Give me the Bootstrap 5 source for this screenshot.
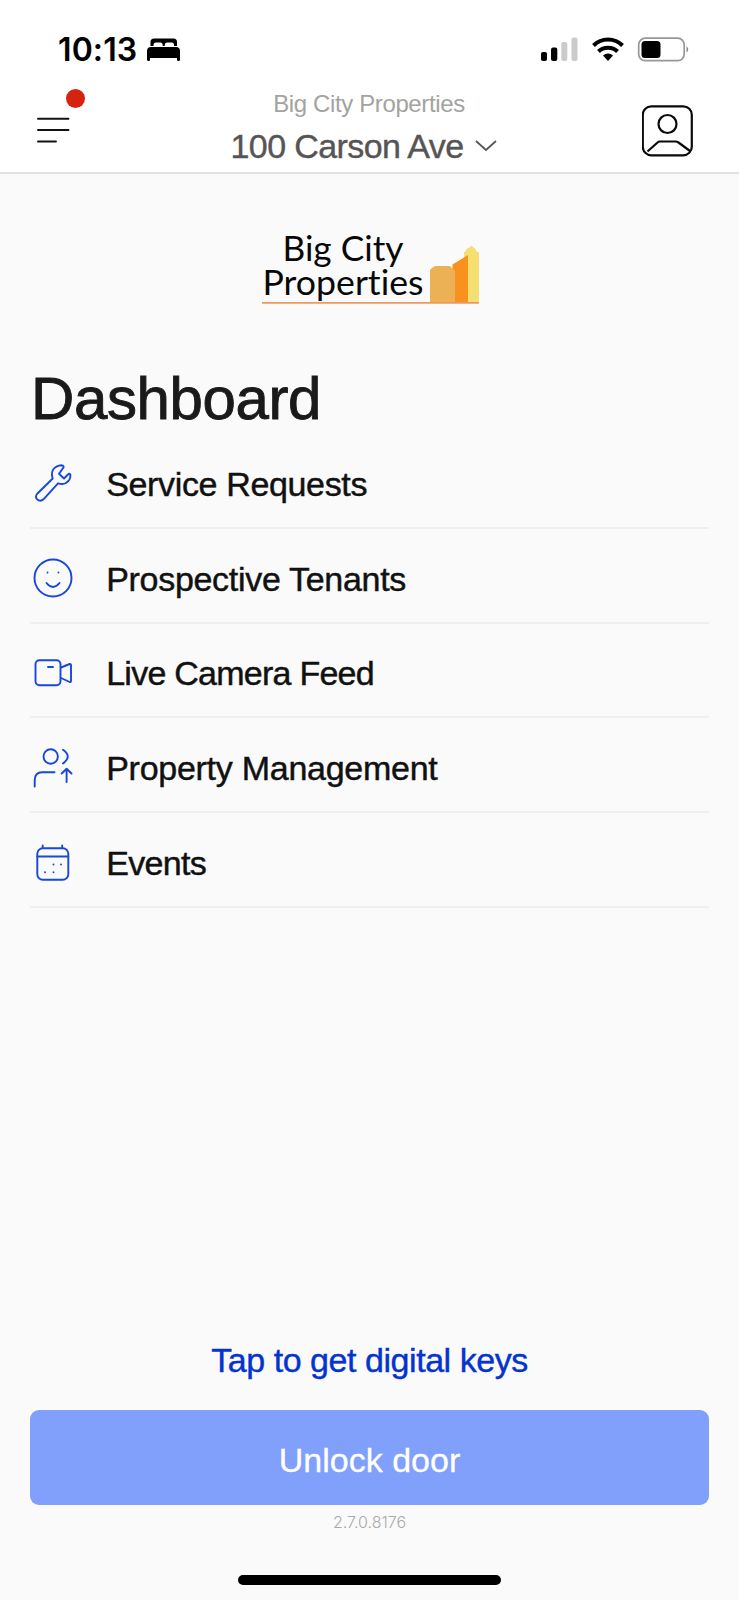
<!DOCTYPE html>
<html lang="en">
<head>
<meta charset="utf-8">
<meta name="viewport" content="width=device-width, initial-scale=1">
<title>Dashboard</title>
<link href="https://cdn.jsdelivr.net/npm/bootstrap@5.3.0/dist/css/bootstrap.min.css" rel="stylesheet">
<style>
body{background:#fafafa;font-family:"Liberation Sans",Arial,sans-serif;color:#111}
.screen{height:1600px;overflow:hidden}
.topbar{height:174px;border-bottom:2px solid #e2e2e2;background:#fff}
.status{height:88px;padding:12px 49px 0 58px}
.clock{font:600 32px/40px Inter,sans-serif;letter-spacing:.1px;color:#000}
.bed{margin-left:10px}
.nav-row{height:84px;padding:0 45px 0 37px}
.side{width:49px}
.dot{width:19px;height:19px;left:29px;top:-28.5px;background:#d6230f}
.company{font-size:24px;line-height:28px;color:#a3a39f;letter-spacing:-.37px;padding-left:10px;margin-top:-4px}
.address{font-size:34px;line-height:40px;color:#555;letter-spacing:-.6px;margin-top:8px;gap:12px;-webkit-text-stroke:.4px #555}
.profile{margin-top:2px}
.brand-logo{margin-top:56px;height:80px;overflow:visible;font-variant-ligatures:none}
.page-title{font-size:60px;line-height:68px;margin:55px 0 0 1px;font-weight:400;color:#1a1a1a;letter-spacing:-.4px;-webkit-text-stroke:.9px #1a1a1a}
.menu{margin-top:1px}
.menu .list-group-item{height:94.8px;padding:6px 0 0 3px;background:none;border:0;border-bottom:2px solid #efefec!important;border-radius:0;font-size:34px;line-height:40px;gap:33.2px;color:#111;-webkit-text-stroke:.45px #111}
.menu span{padding-top:1px}
.menu svg{fill:none;stroke:#1747dc;stroke-width:1.9;stroke-linecap:round;stroke-linejoin:round}
.keys{font-size:34px;line-height:40px;color:#0433cf;letter-spacing:-.45px;-webkit-text-stroke:.4px #0433cf}
.unlock{height:95px;border-radius:9px;background:#80a0fb;border:0;color:#fff;font-size:34px;margin-top:30px;padding:5px 0 0;letter-spacing:0;-webkit-text-stroke:.3px #fff}
.unlock:hover{background:#80a0fb;color:#fff}
.version{font:300 16px/20px Inter,sans-serif;color:#aaa;margin-top:7px;margin-bottom:43px}
.home{width:263px;height:10px;background:#000;margin-bottom:15px}
.bottom{padding:0 30px}
</style>
</head>
<body>
<div class="screen d-flex flex-column">
  <header class="topbar flex-shrink-0">
    <div class="status d-flex align-items-center justify-content-between">
      <div class="d-flex align-items-center">
        <span class="clock">10:13</span>
        <svg class="bed" width="34" height="24" viewBox="0 0 34 24"><path d="M3.500 8V4Q3.500 0.500 7 0.500H26.500Q30 0.500 30 4V8H27V7Q27 4.500 24.500 4.500H20Q17.700 4.500 17.700 7V8H15.700V7Q15.700 4.500 13.500 4.500H9Q6.500 4.500 6.500 7V8Z"/><path d="M0 22V13Q0 9 4 9H29Q33 9 33 13V22Q33 23 31.500 23Q30 23 30 22V20H3V22Q3 23 1.500 23Q0 23 0 22Z"/></svg>
      </div>
      <svg width="150" height="26" viewBox="0 0 150 26">
        <rect x="1" y="15" width="6" height="9" rx="2"/><rect x="11" y="10.500" width="6.300" height="13.500" rx="2"/>
        <rect x="21.300" y="5" width="6" height="19" rx="2" fill="#cbcbcb"/><rect x="31.500" y="0.500" width="6" height="23.500" rx="2" fill="#cbcbcb"/>
        <g fill="none" stroke="#000" stroke-width="4"><path d="M53.500 8.500C61.500 0.500 74.500 0.500 82.500 8.500"/><path d="M58.500 14.500C63.500 9.500 72.500 9.500 77.500 14.500"/></g>
        <path d="M63 18.500Q68 14.500 73 18.500L68 24Z"/>
        <rect x="98.700" y="1.200" width="45.500" height="22.500" rx="6.500" fill="none" stroke="#979797" stroke-width="1.700"/>
        <rect x="101.500" y="4" width="19" height="17" rx="3.500"/><path d="M146.500 9Q150 12.300 146.500 15.700Z" fill="#888"/>
      </svg>
    </div>
    <div class="nav-row d-flex justify-content-between align-items-center">
      <div class="side position-relative">
        <svg class="d-block" width="34" height="26" viewBox="0 0 34 26" stroke="#111" stroke-width="1.900" stroke-linecap="round"><path d="M1 1.700H31.500M1 13H31.500M1 24.500H19"/></svg>
        <span class="dot position-absolute rounded-circle"></span>
      </div>
      <div class="text-center">
        <div class="company">Big City Properties</div>
        <div class="address d-flex align-items-center"><span>100 Carson Ave</span><svg width="22" height="14" viewBox="0 0 22 14" fill="none" stroke="#555" stroke-width="1.700"><path d="M1 2L11 11L21 2"/></svg></div>
      </div>
      <svg class="profile" width="52" height="52" viewBox="0 0 52 52" fill="none" stroke="#0a0a0a" stroke-width="2.200"><rect x="0.800" y="1.300" width="49" height="49" rx="8.500" style="overflow:visible"/><circle cx="25.500" cy="19" r="9"/><path d="M5.500 46.500L15.500 37.500Q16.500 36.500 18 36.500H33.500Q35 36.500 36.500 37.500L48 46"/></svg>
    </div>
  </header>

  <main class="px-0 flex-grow-1 d-flex flex-column">
    <svg class="brand-logo align-self-center flex-shrink-0" width="220" height="80" viewBox="260 230 220 80">
      <g font-family="Lato, sans-serif" font-size="34" fill="#080808">
        <text x="282.500" y="261" textLength="121" lengthAdjust="spacingAndGlyphs">Big City</text>
        <text x="262.500" y="295" textLength="161" lengthAdjust="spacingAndGlyphs">Properties</text>
      </g>
      <path d="M464 302V252H465L467 248.500L469.500 247.500L471.500 245.500L473.500 247.500L475 248.500L477 252H479V302Z" fill="#f5df70"/>
      <path d="M430 302V270L432 268L435 266H450L452 268L455 270V302Z" fill="#edb155"/>
      <path d="M455 302V271L452.500 268.500V264.500L468 255V302Z" fill="#f7921f"/>
      <path d="M262 302.900H479" stroke="#ea9a5c" stroke-width="1.700"/>
    </svg>

    <div class="bottom pt-0">
      <h1 class="page-title">Dashboard</h1>
      <div class="list-group list-group-flush menu">
        <a class="list-group-item d-flex align-items-center" href="#">
          <svg width="40" height="40" viewBox="0 0 40 40"><path d="M19.700 15.500L4 31Q1.800 34 4.300 36.500Q7.500 39 10.500 36.300L25 20.300Q30 21.800 33 20Q38 17 37.300 11.500Q36.300 10 35 11.500L31 15.500L26 10.800L30.300 4.800Q31.300 2.500 28.500 2.200Q23.500 2.500 20.500 6Q17.800 10 19.700 15.500Z"/></svg>
          <span style="letter-spacing:-.35px">Service Requests</span></a>
        <a class="list-group-item d-flex align-items-center" href="#">
          <svg width="40" height="40" viewBox="0 0 40 40"><circle cx="20" cy="20" r="18.500"/><path d="M14.500 14.500V14.600M25.500 14.500V14.600M13.500 25Q20 33 26.500 25"/></svg>
          <span style="letter-spacing:-.3px">Prospective Tenants</span></a>
        <a class="list-group-item d-flex align-items-center" href="#">
          <svg width="40" height="40" viewBox="0 0 40 40"><rect x="2.500" y="7.300" width="25" height="25" rx="4"/><path d="M28 14.500L36.700 11Q38 10.800 38 12V28Q38 29.500 36.700 29L28 25M15 14H20"/></svg>
          <span style="letter-spacing:-.75px">Live Camera Feed</span></a>
        <a class="list-group-item d-flex align-items-center" href="#">
          <svg width="40" height="40" viewBox="0 0 40 40"><circle cx="17.700" cy="8.500" r="7.200"/><path d="M30 1.800Q39.500 8.500 30 15.500M1.700 38.500V32Q2 24.300 9 24.300H21.500M33.600 34V21M28.700 25.500L33.600 20.700L38.500 25.500"/></svg>
          <span style="letter-spacing:-.27px">Property Management</span></a>
        <a class="list-group-item d-flex align-items-center" href="#">
          <svg width="40" height="40" viewBox="0 0 40 40"><rect x="4.300" y="5.200" width="31" height="31.500" rx="5.500"/><path d="M4.300 13.500H35.300M9.700 2.500V5M29.200 2.500V5M20.500 21.400V21.500M28 21.400V21.500M12 29.200V29.300M20.500 29.200V29.300"/></svg>
          <span style="letter-spacing:-.7px">Events</span></a>
      </div>
    </div>

    <div class="bottom mt-auto d-flex flex-column align-items-center">
      <a class="keys text-decoration-none" href="#">Tap to get digital keys</a>
      <button class="btn unlock w-100">Unlock door</button>
      <div class="version">2.7.0.8176</div>
      <div class="home rounded-pill"></div>
    </div>
  </main>
</div>
<script src="https://cdn.jsdelivr.net/npm/bootstrap@5.3.0/dist/js/bootstrap.bundle.min.js"></script>
</body>
</html>
